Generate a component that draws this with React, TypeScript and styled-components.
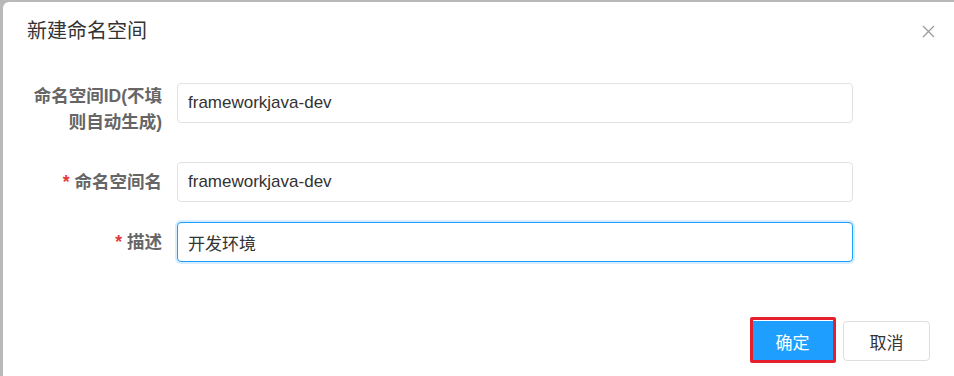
import React from "react";
import styled, { createGlobalStyle } from "styled-components";

const GlobalStyle = createGlobalStyle`
  html, body {
    margin: 0;
    padding: 0;
    background: #b9b9b9;
    overflow: hidden;
  }
  body {
    font-family: "Liberation Sans", "Noto Sans CJK SC", sans-serif;
  }
`

const Modal = styled.div`
  margin: 2px 0 0 3px;
  width: calc(100% - 3px);
  height: 380px;
  background: #fff;
  border-radius: 6px 0 0 0;
  display: flex;
  flex-direction: column;
`

const Header = styled.div`
  height: 58px;
  padding: 0 19px 0 24px;
  display: flex;
  align-items: center;
  justify-content: space-between;
`

const Title = styled.div`
  font-size: 20px;
  color: #333;
  line-height: 28px;
`

const CloseBtn = styled.button`
  border: 0;
  background: transparent;
  padding: 0;
  width: 14px;
  height: 14px;
  display: flex;
  align-items: center;
  justify-content: center;
  cursor: pointer;
`

const Form = styled.div`
  padding: 23px 0 0 9px;
  display: flex;
  flex-direction: column;
  gap: 20px;
`

const Row = styled.div`
  display: flex;
  align-items: flex-start;
`

const Label = styled.label<{ $multi?: boolean }>`
  width: 165px;
  box-sizing: border-box;
  padding: ${({ $multi }) => ($multi ? "0 15px 7px 0" : "7px 15px 0 0")};
  text-align: right;
  font-size: 17.5px;
  font-weight: bold;
  line-height: 26px;
  color: #666;
  white-space: nowrap;
`

const Star = styled.span`
  color: #e5393b;
  margin-right: 5px;
`

const Input = styled.input<{ $focus?: boolean }>`
  width: 676px;
  height: 40px;
  box-sizing: border-box;
  padding: 0 10px;
  border: 1px solid ${({ $focus }) => ($focus ? "#1e9fff" : "#e2e2e2")};
  border-radius: 4px;
  box-shadow: ${({ $focus }) => ($focus ? "0 0 0 2px rgba(30, 159, 255, 0.18)" : "none")};
  font-family: inherit;
  font-size: 17px;
  color: #333;
  outline: none;
  background: #fff;
`

const Footer = styled.div`
  margin-top: 59px;
  padding: 0 24px 0 0;
  display: flex;
  justify-content: flex-end;
  align-items: center;
  gap: 10px;
`

const Button = styled.button<{ $primary?: boolean }>`
  position: relative;
  height: 40px;
  padding: 0;
  width: ${({ $primary }) => ($primary ? "81px" : "87px")};
  border: 1px solid ${({ $primary }) => ($primary ? "#1e9fff" : "#dedede")};
  border-radius: ${({ $primary }) => ($primary ? "0" : "4px")};
  background: ${({ $primary }) => ($primary ? "#1e9fff" : "#fff")};
  color: ${({ $primary }) => ($primary ? "#fff" : "#333")};
  font-family: inherit;
  font-size: 17px;
  cursor: pointer;
`

// red highlight drawn around the confirm button in the screenshot
const Highlight = styled.span`
  position: absolute;
  left: -3px;
  top: -5px;
  right: -4px;
  bottom: -3px;
  border: 3px solid #e5202e;
  border-radius: 2px;
  pointer-events: none;
`

export default function App() {
  return (
    <>
      <GlobalStyle />
      <Modal>
        <Header>
          <Title>新建命名空间</Title>
          <CloseBtn>
            <svg width="13" height="13" viewBox="0 0 13 13">
              <path d="M1 1 L12 12 M12 1 L1 12" stroke="#9a9a9a" strokeWidth="1.2" fill="none" />
            </svg>
          </CloseBtn>
        </Header>
        <Form>
          <Row>
            <Label $multi>
              命名空间ID(不填
              <br />
              则自动生成)
            </Label>
            <Input defaultValue="frameworkjava-dev" />
          </Row>
          <Row>
            <Label>
              <Star>*</Star>命名空间名
            </Label>
            <Input defaultValue="frameworkjava-dev" />
          </Row>
          <Row>
            <Label>
              <Star>*</Star>描述
            </Label>
            <Input $focus defaultValue="开发环境" />
          </Row>
        </Form>
        <Footer>
          <Button $primary>
            确定
            <Highlight />
          </Button>
          <Button>取消</Button>
        </Footer>
      </Modal>
    </>
  );
}
